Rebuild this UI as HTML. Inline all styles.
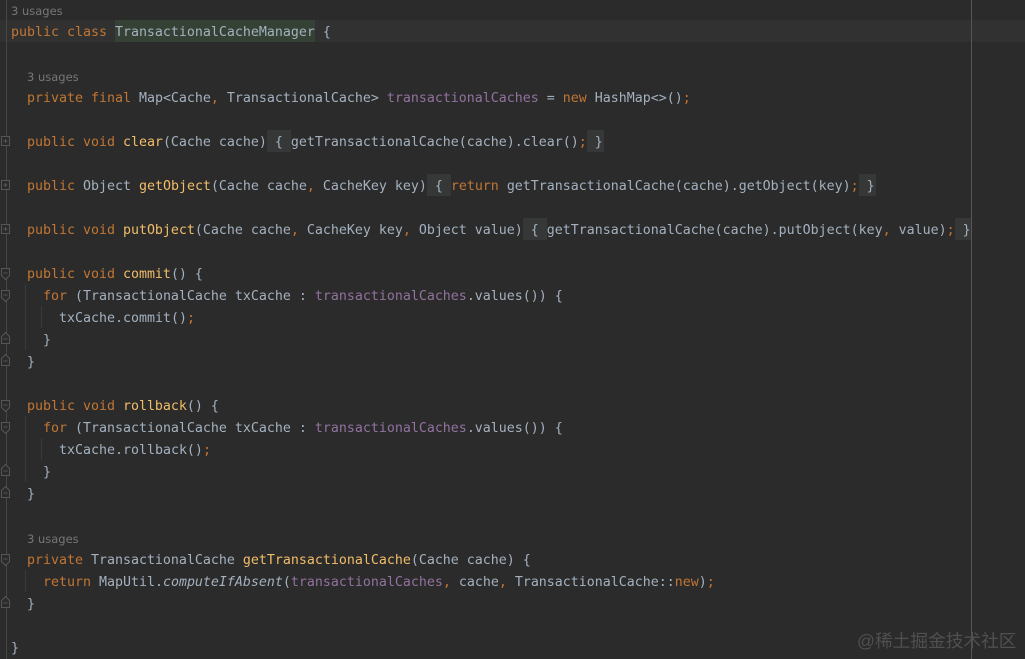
<!DOCTYPE html>
<html><head><meta charset="utf-8">
<style>
html,body{margin:0;padding:0;background:#2b2b2b;width:1025px;height:659px;overflow:hidden}
.w{position:relative;width:1025px;height:659px;overflow:hidden;background:#2b2b2b;font-family:"DejaVu Sans Mono","Liberation Mono",monospace;font-size:13.29px;color:#a4b1bf}
.l{position:absolute;height:22px;line-height:22px;white-space:pre;margin-top:2px}
.u{position:absolute;font-family:"DejaVu Sans","Liberation Sans",sans-serif;font-size:11.5px;color:#767676;line-height:14px;white-space:pre;margin-top:1px}
.k{color:#c27634}.m{color:#f2bd69}.f{color:#92729f}.i{font-style:italic}
.b{position:absolute;background:#363837;height:22px}
.g{position:absolute;width:1px;background:#3a3a3a}
svg{position:absolute;left:0;top:0}
</style></head><body><div class="w">
<div style="position:absolute;left:0;top:20px;width:1025px;height:22px;background:#313131"></div>
<div style="position:absolute;left:115px;top:20px;width:200px;height:22px;background:#344134"></div>
<div style="position:absolute;left:971px;top:0;width:1px;height:659px;background:#555"></div>
<div style="position:absolute;left:6px;top:0;width:1px;height:659px;background:#464646"></div>

<div class="b" style="left:267px;top:130px;width:24px"></div>
<div class="b" style="left:587px;top:130px;width:17px"></div>
<div class="b" style="left:427px;top:174px;width:24px"></div>
<div class="b" style="left:859px;top:174px;width:17px"></div>
<div class="b" style="left:523px;top:218px;width:24px"></div>
<div class="b" style="left:955px;top:218px;width:16px"></div>

<div class="g" style="left:25px;top:284px;height:66px"></div>
<div class="g" style="left:41px;top:306px;height:22px"></div>
<div class="g" style="left:25px;top:416px;height:66px"></div>
<div class="g" style="left:41px;top:438px;height:22px"></div>
<div class="g" style="left:25px;top:570px;height:22px"></div>

<svg width="20" height="659" fill="#2b2b2b" stroke="#565656" stroke-width="1">
<path d="M1.5 136.5h8v9h-8zM3.5 141h4M5.5 139v4"/>
<path d="M1.5 180.5h8v9h-8zM3.5 185h4M5.5 183v4"/>
<path d="M1.5 224.5h8v9h-8zM3.5 229h4M5.5 227v4"/>
<path d="M1.5 268.5h8v7l-4 4l-4-4zM3.5 273h4"/>
<path d="M1.5 290.5h8v7l-4 4l-4-4zM3.5 295h4"/>
<path d="M5.5 332.5l4 4v7h-8v-7zM3.5 339h4"/>
<path d="M5.5 354.5l4 4v7h-8v-7zM3.5 361h4"/>
<path d="M1.5 400.5h8v7l-4 4l-4-4zM3.5 405h4"/>
<path d="M1.5 422.5h8v7l-4 4l-4-4zM3.5 427h4"/>
<path d="M5.5 464.5l4 4v7h-8v-7zM3.5 471h4"/>
<path d="M5.5 486.5l4 4v7h-8v-7zM3.5 493h4"/>
<path d="M1.5 554.5h8v7l-4 4l-4-4zM3.5 559h4"/>
<path d="M5.5 596.5l4 4v7h-8v-7zM3.5 603h4"/>
</svg>

<div class="u" style="left:11px;top:3px">3 usages</div>
<div class="l" style="left:11px;top:20px"><span class="k">public class </span>TransactionalCacheManager {</div>
<div class="u" style="left:27px;top:69px">3 usages</div>
<div class="l" style="left:27px;top:86px"><span class="k">private final </span>Map&lt;Cache<span class="k">,</span> TransactionalCache&gt; <span class="f">transactionalCaches</span> = <span class="k">new </span>HashMap&lt;&gt;()<span class="k">;</span></div>
<div class="l" style="left:27px;top:130px"><span class="k">public void </span><span class="m">clear</span>(Cache cache) { getTransactionalCache(cache).clear()<span class="k">;</span> }</div>
<div class="l" style="left:27px;top:174px"><span class="k">public </span>Object <span class="m">getObject</span>(Cache cache<span class="k">,</span> CacheKey key) { <span class="k">return </span>getTransactionalCache(cache).getObject(key)<span class="k">;</span> }</div>
<div class="l" style="left:27px;top:218px"><span class="k">public void </span><span class="m">putObject</span>(Cache cache<span class="k">,</span> CacheKey key<span class="k">,</span> Object value) { getTransactionalCache(cache).putObject(key<span class="k">,</span> value)<span class="k">;</span> }</div>
<div class="l" style="left:27px;top:262px"><span class="k">public void </span><span class="m">commit</span>() {</div>
<div class="l" style="left:43px;top:284px"><span class="k">for </span>(TransactionalCache txCache : <span class="f">transactionalCaches</span>.values()) {</div>
<div class="l" style="left:59px;top:306px">txCache.commit()<span class="k">;</span></div>
<div class="l" style="left:43px;top:328px">}</div>
<div class="l" style="left:27px;top:350px">}</div>
<div class="l" style="left:27px;top:394px"><span class="k">public void </span><span class="m">rollback</span>() {</div>
<div class="l" style="left:43px;top:416px"><span class="k">for </span>(TransactionalCache txCache : <span class="f">transactionalCaches</span>.values()) {</div>
<div class="l" style="left:59px;top:438px">txCache.rollback()<span class="k">;</span></div>
<div class="l" style="left:43px;top:460px">}</div>
<div class="l" style="left:27px;top:482px">}</div>
<div class="u" style="left:27px;top:531px">3 usages</div>
<div class="l" style="left:27px;top:548px"><span class="k">private </span>TransactionalCache <span class="m">getTransactionalCache</span>(Cache cache) {</div>
<div class="l" style="left:43px;top:570px"><span class="k">return </span>MapUtil.<span class="i">computeIfAbsent</span>(<span class="f">transactionalCaches</span><span class="k">,</span> cache<span class="k">,</span> TransactionalCache::<span class="k">new</span>)<span class="k">;</span></div>
<div class="l" style="left:27px;top:592px">}</div>
<div class="l" style="left:11px;top:636px">}</div>

<div style="position:absolute;left:857px;top:630px;font-family:'Liberation Sans','Noto Sans CJK SC',sans-serif;font-size:17.7px;line-height:22px;color:#505050;white-space:pre">@稀土掘金技术社区</div>
</div></body></html>
